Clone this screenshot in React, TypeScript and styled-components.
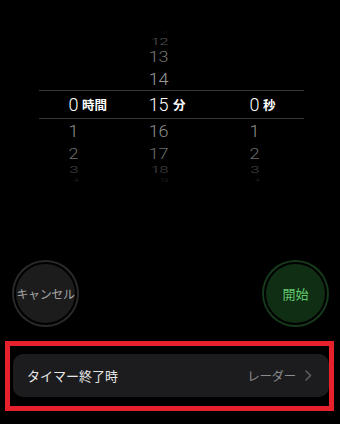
import React from "react";
import styled, { createGlobalStyle } from "styled-components";

const Global = createGlobalStyle`
  html, body { margin: 0; padding: 0; background: #000; }
  body { width: 340px; height: 424px; overflow: hidden; font-family: "Noto Sans CJK JP", "Noto Sans", sans-serif; }
`;

const Page = styled.div`
  width: 340px;
  height: 424px;
  background: #000;
  display: flex;
  flex-direction: column;
`;

const Wheel = styled.div`
  margin: 30px 0 0 39px;
  width: 265px;
  display: flex;
  flex-direction: column;
`;

const WheelRow = styled.div<{ $h: number; $selected?: boolean }>`
  height: ${(p) => p.$h}px;
  box-sizing: border-box;
  display: grid;
  grid-template-columns: 39px 52px 38px 52px 39px 45px;
  border-top: ${(p) => (p.$selected ? "1px solid #363636" : "none")};
  border-bottom: ${(p) => (p.$selected ? "1px solid #363636" : "none")};
`;

const NumCell = styled.div`
  display: flex;
  align-items: center;
  justify-content: flex-end;
`;

const Num = styled.span<{ $scale: number; $color: string; $size: number }>`
  display: inline-block;
  font-family: Roboto, "Liberation Sans", sans-serif;
  font-size: ${(p) => p.$size}px;
  line-height: ${(p) => Math.round(p.$size * 0.9)}px;
  font-weight: 300;
  letter-spacing: -0.4px;
  color: ${(p) => p.$color};
  transform: scaleY(${(p) => p.$scale});
  white-space: nowrap;
`;

const UnitCell = styled.div<{ $pad: number }>`
  display: flex;
  align-items: center;
  padding-left: ${(p) => p.$pad}px;
  padding-top: 2px;
`;

const Unit = styled.span`
  font-family: "Noto Sans CJK JP", sans-serif;
  font-size: 12.5px;
  font-weight: 700;
  color: #fff;
  line-height: 1;
`;

const ButtonRow = styled.div`
  margin-top: 76px;
  padding: 0 11px 0 12px;
  display: flex;
  justify-content: space-between;
  align-items: center;
`;

const RoundButton = styled.button<{ $variant: "cancel" | "start" }>`
  width: 63px;
  height: 63px;
  margin: 2px;
  border-radius: 50%;
  border: 2px solid #000;
  box-sizing: border-box;
  padding: 0;
  display: flex;
  align-items: center;
  justify-content: center;
  background: ${(p) => (p.$variant === "cancel" ? "#1c1c1d" : "#0f2e14")};
  box-shadow: 0 0 0 2px ${(p) => (p.$variant === "cancel" ? "#2a2a2b" : "#163a1c")};
  color: ${(p) => (p.$variant === "cancel" ? "#a3a3a3" : "#62c96e")};
  font-family: "Noto Sans CJK JP", sans-serif;
  font-size: ${(p) => (p.$variant === "cancel" ? "12px" : "13px")};
  letter-spacing: ${(p) => (p.$variant === "cancel" ? "-0.4px" : "0")};
  white-space: nowrap;
  overflow: visible;
`;

const Highlight = styled.div`
  margin: 14px 0 0 5px;
  width: 329px;
  height: 70px;
  box-sizing: border-box;
  border: 5px solid #e6212b;
  padding: 8px 0 0 3px;
`;

const SettingRow = styled.div`
  height: 43px;
  border-radius: 10px;
  background: #1c1c1e;
  display: flex;
  align-items: center;
  justify-content: space-between;
  padding: 0 17px 0 14px;
`;

const SettingLabel = styled.span`
  font-family: "Noto Sans CJK JP", sans-serif;
  font-size: 13px;
  color: #e6e6e6;
`;

const SettingValue = styled.span`
  display: flex;
  align-items: center;
  gap: 9px;
  font-family: "Noto Sans CJK JP", sans-serif;
  font-size: 12.5px;
  color: #8c8c8e;
  letter-spacing: -0.3px;
`;

type Item = { h: number; size: number; scale: number; color: string; hour?: string; min: string; sec?: string };

const rows: Item[] = [
  { h: 5, size: 6, scale: 0.5, color: "#262626", min: "11" },
  { h: 12, size: 16, scale: 0.55, color: "#555", min: "12" },
  { h: 20, size: 18, scale: 0.8, color: "#7a7a7a", min: "13" },
  { h: 23, size: 18, scale: 0.93, color: "#9a9a9a", min: "14" },
  { h: 29, size: 18, scale: 1, color: "#fff", hour: "0", min: "15", sec: "0" },
  { h: 26, size: 18, scale: 0.88, color: "#8c8c8c", hour: "1", min: "16", sec: "1" },
  { h: 17, size: 18, scale: 0.78, color: "#6e6e6e", hour: "2", min: "17", sec: "2" },
  { h: 15, size: 16, scale: 0.55, color: "#4a4a4a", hour: "3", min: "18", sec: "3" },
  { h: 7, size: 8, scale: 0.6, color: "#262626", hour: "4", min: "19", sec: "4" },
];

const Chevron = () => (
  <svg width="7" height="11" viewBox="0 0 7 11" fill="none">
    <path d="M1 1l4.5 4.5L1 10" stroke="#5e5e60" strokeWidth="1.6" strokeLinecap="round" strokeLinejoin="round" />
  </svg>
);

export default function App() {
  return (
    <Page>
      <Global />
      <Wheel>
        {rows.map((r, i) => {
          const sel = i === 4;
          const num = (v?: string) =>
            v ? (
              <Num $scale={r.scale} $color={r.color} $size={r.size}>
                {v}
              </Num>
            ) : null;
          return (
            <WheelRow key={i} $h={r.h} $selected={sel}>
              <NumCell>{num(r.hour)}</NumCell>
              <UnitCell $pad={4}>{sel && <Unit>時間</Unit>}</UnitCell>
              <NumCell>{num(r.min)}</NumCell>
              <UnitCell $pad={5}>{sel && <Unit>分</Unit>}</UnitCell>
              <NumCell>{num(r.sec)}</NumCell>
              <UnitCell $pad={4}>{sel && <Unit>秒</Unit>}</UnitCell>
            </WheelRow>
          );
        })}
      </Wheel>
      <ButtonRow>
        <RoundButton $variant="cancel">キャンセル</RoundButton>
        <RoundButton $variant="start">開始</RoundButton>
      </ButtonRow>
      <Highlight>
        <SettingRow>
          <SettingLabel>タイマー終了時</SettingLabel>
          <SettingValue>
            レーダー
            <Chevron />
          </SettingValue>
        </SettingRow>
      </Highlight>
    </Page>
  );
}
